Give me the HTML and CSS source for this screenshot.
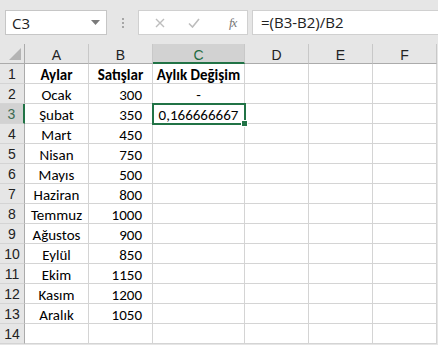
FILE: index.html
```html
<!DOCTYPE html>
<html>
<head>
<meta charset="utf-8">
<link rel="stylesheet" href="styles.css">
</head>
<body>
<div class="app">
  <div class="toolbar">
    <div class="namebox">
      <span class="name">C3</span>
      <svg class="dd" width="9" height="5" viewBox="0 0 9 5"><path d="M0 0H9L4.5 5Z" fill="#7a7a7a"/></svg>
    </div>
    <div class="dots"><i></i><i></i><i></i></div>
    <div class="fbuttons">
      <svg class="fx-x" width="10" height="10" viewBox="0 0 10 10"><path d="M1 1L9 9M9 1L1 9" stroke="#bdbdbd" stroke-width="1.4"/></svg>
      <svg class="fx-check" width="12" height="10" viewBox="0 0 12 10"><path d="M1 5.5L4.5 9L11 1" stroke="#bdbdbd" stroke-width="1.6" fill="none"/></svg>
      <span class="fx">fx</span>
    </div>
    <div class="formula">=(B3-B2)/B2</div>
  </div>
  <div class="sheet">
    <div class="hd corner"><span class="tri"></span></div>
    <div class="hd col">A</div>
    <div class="hd col">B</div>
    <div class="hd col sel">C</div>
    <div class="hd col">D</div>
    <div class="hd col">E</div>
    <div class="hd col">F</div>

    <div class="hd row">1</div><div class="c ctr b">Aylar</div><div class="c ctr b">Satışlar</div><div class="c ctr b">Aylık Değişim</div><div class="c"></div><div class="c"></div><div class="c"></div>
    <div class="hd row">2</div><div class="c ctr">Ocak</div><div class="c num">300</div><div class="c ctr">-</div><div class="c"></div><div class="c"></div><div class="c"></div>
    <div class="hd row rsel">3</div><div class="c ctr">Şubat</div><div class="c num">350</div><div class="c ctr active">0,166666667<span class="handle"></span></div><div class="c"></div><div class="c"></div><div class="c"></div>
    <div class="hd row">4</div><div class="c ctr">Mart</div><div class="c num">450</div><div class="c"></div><div class="c"></div><div class="c"></div><div class="c"></div>
    <div class="hd row">5</div><div class="c ctr">Nisan</div><div class="c num">750</div><div class="c"></div><div class="c"></div><div class="c"></div><div class="c"></div>
    <div class="hd row">6</div><div class="c ctr">Mayıs</div><div class="c num">500</div><div class="c"></div><div class="c"></div><div class="c"></div><div class="c"></div>
    <div class="hd row">7</div><div class="c ctr">Haziran</div><div class="c num">800</div><div class="c"></div><div class="c"></div><div class="c"></div><div class="c"></div>
    <div class="hd row">8</div><div class="c ctr">Temmuz</div><div class="c num">1000</div><div class="c"></div><div class="c"></div><div class="c"></div><div class="c"></div>
    <div class="hd row">9</div><div class="c ctr">Ağustos</div><div class="c num">900</div><div class="c"></div><div class="c"></div><div class="c"></div><div class="c"></div>
    <div class="hd row">10</div><div class="c ctr">Eylül</div><div class="c num">850</div><div class="c"></div><div class="c"></div><div class="c"></div><div class="c"></div>
    <div class="hd row">11</div><div class="c ctr">Ekim</div><div class="c num">1150</div><div class="c"></div><div class="c"></div><div class="c"></div><div class="c"></div>
    <div class="hd row">12</div><div class="c ctr">Kasım</div><div class="c num">1200</div><div class="c"></div><div class="c"></div><div class="c"></div><div class="c"></div>
    <div class="hd row">13</div><div class="c ctr">Aralık</div><div class="c num">1050</div><div class="c"></div><div class="c"></div><div class="c"></div><div class="c"></div>
    <div class="hd row">14</div><div class="c"></div><div class="c"></div><div class="c"></div><div class="c"></div><div class="c"></div><div class="c"></div>
  </div>
</div>
</body>
</html>
```

FILE: styles.css
```css
html, body {
  margin: 0;
  padding: 0;
  background: #e6e6e6;
}
.app {
  width: 438px;
  height: 345px;
  overflow: hidden;
  background: #e6e6e6;
}
.toolbar {
  height: 44px;
  box-sizing: border-box;
  padding: 10px 0 0 5px;
  display: flex;
  align-items: flex-start;
  font-family: "Open Sans", "Liberation Sans", sans-serif;
}
.namebox {
  width: 102px;
  height: 25px;
  box-sizing: border-box;
  border: 1px solid #c6c6c6;
  background: #fff;
  display: flex;
  align-items: center;
  justify-content: space-between;
  padding: 0 6px 0 6px;
}
.name {
  font-size: 15px;
  color: #222;
}
.dd {
  display: block;
}
.dots {
  width: 31px;
  height: 25px;
  display: flex;
  flex-direction: column;
  align-items: center;
  justify-content: center;
  gap: 2px;
}
.dots i {
  display: block;
  width: 2px;
  height: 2px;
  background: #a6a6a6;
}
.fbuttons {
  width: 110px;
  height: 25px;
  box-sizing: border-box;
  border: 1px solid #d0d0d0;
  background: #fff;
  display: flex;
  align-items: center;
  padding-left: 16px;
}
.fx-x {
  display: block;
}
.fx-check {
  display: block;
  margin-left: 23px;
}
.fx {
  margin-left: 29px;
  font-family: "Liberation Serif", serif;
  font-style: italic;
  font-size: 13px;
  color: #777;
  letter-spacing: -1px;
}
.formula {
  flex: 1;
  margin-left: 4px;
  height: 25px;
  box-sizing: border-box;
  border: 1px solid #d0d0d0;
  border-right: none;
  background: #fff;
  padding-left: 8px;
  font-size: 15px;
  line-height: 23px;
  color: #222;
}
.sheet {
  display: grid;
  grid-template-columns: 25px 64px 64px 92px 64px 64px 64px;
  grid-auto-rows: 20px;
  background: #fff;
  width: 437px;
}
.hd {
  background: #e6e6e6;
  box-sizing: border-box;
  font-family: "Liberation Sans", Arial, sans-serif;
  font-size: 14px;
  color: #222;
  display: flex;
  align-items: center;
  justify-content: center;
}
.corner {
  border-right: 1px solid #ababab;
  border-bottom: 1px solid #ababab;
  position: relative;
}
.tri {
  position: absolute;
  right: 3px;
  bottom: 3px;
  width: 0;
  height: 0;
  border-left: 12px solid transparent;
  border-bottom: 12px solid #b4b4b4;
}
.col {
  border-right: 1px solid #c8c8c8;
  border-bottom: 1px solid #ababab;
  padding-top: 2px;
}
.col.sel {
  background: #d2d2d2;
  border-bottom: 2px solid #217346;
  color: #1e6b41;
  padding-top: 3px;
}
.row {
  border-right: 1px solid #ababab;
  border-bottom: 1px solid #d4d4d4;
  font-family: "Liberation Sans", Arial, sans-serif;
  font-size: 14px;
}
.row.rsel {
  background: #d2d2d2;
  border-right: 2px solid #217346;
  color: #3d6b52;
}
.c {
  box-sizing: border-box;
  border-right: 1px solid #d4d4d4;
  border-bottom: 1px solid #d4d4d4;
  font-family: Carlito, Lato, "Open Sans", sans-serif;
  font-size: 15px;
  color: #000;
  display: flex;
  align-items: center;
  white-space: nowrap;
  padding-top: 2px;
}
.ctr {
  justify-content: center;
}
.num {
  justify-content: flex-end;
  padding-right: 10px;
}
.b {
  font-weight: bold;
}
.active {
  position: relative;
  outline: 2px solid #217346;
  outline-offset: -1px;
  z-index: 1;
}
.handle {
  position: absolute;
  right: -4px;
  bottom: -4px;
  width: 5px;
  height: 5px;
  background: #217346;
  border: 1px solid #fff;
}
```
